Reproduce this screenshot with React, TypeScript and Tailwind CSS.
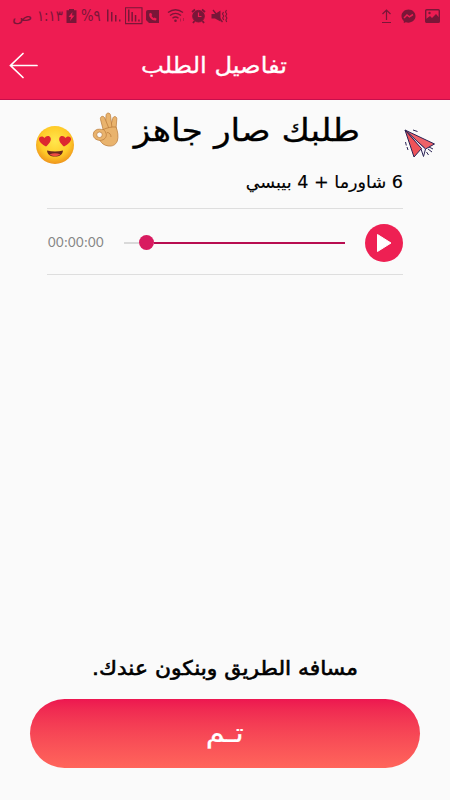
import React from 'react';

const BARS = [0, 4, 8, 12];

function BatteryIcon() {
  return (
    <svg width="11" height="16" viewBox="0 0 11 16" fill="currentColor">
      <path fillRule="evenodd" d="M3 1h5v1.200h2.500V15H.5V2.200H3ZM6.500 4 2.500 9H5l-1 4 4.500-5.500H6Z" />
    </svg>
  );
}

function SignalIcon({ boxed = false }: { boxed?: boolean }) {
  return (
    <svg width={boxed ? 18 : 16} height="18" viewBox={boxed ? '-2 0 18 18' : '0 0 16 18'} fill="currentColor">
      {boxed && <path d="M-1.500.8h16.500v15.800h-16.500Z" fill="none" stroke="currentColor" strokeWidth="1.100" />}
      {BARS.map((x, i) => (
        <rect key={x} x={boxed ? x * 0.85 + 1 : x + 1} y={[2.5, 5, 8, 12.5][i]} width="1.500" height={[12, 9.5, 6.5, 2][i]} />
      ))}
    </svg>
  );
}

function PhoneIcon() {
  return (
    <svg width="13" height="15" viewBox="0 0 13 15">
      <path fill="currentColor" d="M2 1h11v13H3L0 11V3a2 2 0 0 1 2-2Z" />
      <path d="M3.300 4.500 5 3.700l1.300 2.300-.9 1 2.300 2.300 1-.8 2 1.200-.8 1.700C6.500 12 2.500 8.500 3.300 4.500Z" fill="#ee1c52" />
    </svg>
  );
}

function WifiIcon() {
  return (
    <svg width="18" height="16" viewBox="0 0 18 16" fill="none" stroke="currentColor" strokeWidth="1.400">
      <path d="M1 4.500Q8.500-1 16 4.500M3 7.500q5.500-4.300 11 0M5.500 10.300q3-2.500 6 0" />
      <circle cx="8.500" cy="12.800" r="1.300" fill="currentColor" stroke="none" />
      <path d="M13.500 13.500v-3M16.500 10v3" strokeWidth=".8" opacity=".6" />
    </svg>
  );
}

function AlarmIcon() {
  return (
    <svg width="15" height="16" viewBox="0 0 15 16" fill="none" stroke="currentColor">
      <circle cx="7.500" cy="8.200" r="5.800" fill="currentColor" />
      <path d="m1 4 3-2.500M14 4l-3-2.500M3.500 13 2 15m9.500-2 1.500 2" strokeWidth="1.800" />
      <path d="M7.500 4.500v4h3" stroke="#ee1c52" strokeWidth="1.200" />
    </svg>
  );
}

function MuteIcon() {
  return (
    <svg width="17" height="16" viewBox="0 0 17 16" fill="none" stroke="currentColor">
      <path d="M.5 6h3.500L9.500 2.500v11L4 10.500H.5Z" fill="currentColor" stroke="none" />
      <path d="m2 2 9.500 12" strokeWidth="1.300" />
      <path d="m12.500 4-1 2 1.200 2-1 2 1 2M15.500 2l-1 2 1.200 2-1 2 1.200 2-1 2 .8 2" strokeWidth="1.100" />
    </svg>
  );
}

function StatusBar() {
  return (
    <div dir="ltr" className="flex h-8 items-center justify-between pl-3 pr-[10px] text-[#7a1638]">
      <div className="flex items-center text-[15px] leading-none">
        <span className="w-[25px]">
          <span className="inline-block origin-left scale-x-[1.12]">ص</span>
        </span>
        <span className="w-[29px] whitespace-nowrap">
          <span dir="rtl" className="inline-block origin-left scale-x-[.88]">١:١٣</span>
        </span>
        <BatteryIcon />
        <span className="ml-1 w-[25px] whitespace-nowrap">
          <span className="inline-block origin-left scale-x-[.88]">%٩</span>
        </span>
        <SignalIcon />
        <span className="ml-[3px]"><SignalIcon boxed /></span>
        <span className="ml-[3px]"><PhoneIcon /></span>
        <span className="ml-2"><WifiIcon /></span>
        <span className="ml-[6px]"><AlarmIcon /></span>
        <span className="ml-[5px]"><MuteIcon /></span>
      </div>
      <div className="flex items-center gap-[9px]">
        <svg width="11" height="16" viewBox="0 0 11 16" fill="none" stroke="currentColor" strokeWidth="1.200">
          <path d="M5.500 12V2M1.500 6l4-4 4 4M1 14.500h9" />
        </svg>
        <svg width="15" height="15" viewBox="0 0 15 15">
          <path fill="currentColor" d="M7.500.5C3.500.5.500 3.400.500 7.100c0 2 .9 3.700 2.300 4.900V14l2-.7c5 1.400 9.700-1.500 9.700-6.200 0-3.700-3-6.600-7-6.600Z" />
          <path d="m3 9 3-3 2.400 1.800L12 5.500" fill="none" stroke="#ee1c52" strokeWidth="1.500" />
        </svg>
        <svg width="15" height="14" viewBox="0 0 15 14">
          <rect x=".7" y=".7" width="13.600" height="12.600" rx="1" fill="none" stroke="currentColor" strokeWidth="1.400" />
          <path fill="currentColor" d="m1 10 4-3 2 2 4-4 3.500 4v4.500H1Z" />
          <circle cx="4.500" cy="4" r="1.200" fill="currentColor" />
        </svg>
      </div>
    </div>
  );
}

function HeartEyes() {
  return (
    <svg width="40" height="40" viewBox="0 0 40 40">
      <defs>
        <radialGradient id="face" cx=".5" cy=".4" r=".6">
          <stop offset="0" stopColor="#ffe74d" />
          <stop offset=".65" stopColor="#ffcb28" />
          <stop offset="1" stopColor="#ee941c" />
        </radialGradient>
      </defs>
      <circle cx="20" cy="20" r="19" fill="url(#face)" />
      <path d="M11 21.500C7.500 19.500 3.500 16.500 4 13.700c.5-2.800 4.200-3 5.600-.6 1.200-2.500 5-2.800 6-.2 1.100 2.900-1.800 6.100-4.600 8.600Z" fill="#dd2730" />
      <path d="M29 21.500c-2.800-2.500-5.700-5.700-4.600-8.600 1-2.600 4.800-2.300 6 .2 1.400-2.400 5.100-2.200 5.600.6.500 2.800-3.500 5.800-7 7.800Z" fill="#dd2730" />
      <path d="M12 25.500q8 2 16 0c-.5 4-3 6-8 6s-7.500-2-8-6Z" fill="#6b281d" />
      <path d="M14.500 29.500q5.500-2.500 11 0-5.500 3.500-11 0Z" fill="#ef4c43" />
    </svg>
  );
}

function OkHand() {
  return (
    <svg width="28" height="36" viewBox="0 0 28 36" fill="#e9b36d" stroke="#b87838" strokeWidth=".7" strokeLinejoin="round">
      <path d="M17.500 19 20.700 6.500c.7-2.900 4.500-2.300 4.100.7L23.800 20Z" />
      <path d="M13 20 14 3.500c.2-3.200 4.200-3.200 4.500-.2L20.500 20Z" />
      <path d="m11.500 19-3-11.500c-.8-3.200 3-4.400 4.200-1.500L18 19Z" />
      <path
        fillRule="evenodd"
        d="M11.500 17.500C14 16 20 14.500 24 15c1.800 4 2.700 10 1.300 14-1.500 4-5 5.500-9 5-4.500-.6-6.800-3-8.300-5.500-4.500-.5-7-3-6.700-6.300.2-3.500 3.200-5.200 6.200-5 1.600 0 2.800.5 4 .3ZM7.500 20a2.800 2.800 0 1 0 0 5.600 2.800 2.800 0 0 0 0-5.600Z"
      />
      <path d="M8 28.500c4.500-.5 6.500-3 6.300-6-.2-2-1.300-3.800-3-5M15 20.500c2.500 0 4 2 4 4.500" fill="none" />
      <path d="M13.500 18.500q5-2 9.700-1.800l.5 3-7.700.3Z" stroke="none" />
    </svg>
  );
}

function PaperPlane() {
  return (
    <svg width="32" height="32" viewBox="0 0 32 32" fill="none" stroke="#292254" strokeLinejoin="round" strokeWidth="1">
      <path d="m1 1 29.500 14L21.500 20Z" fill="#ee6268" />
      <path d="m1 1 20.500 19L19.500 27.500 17 20Z" fill="#f5f2fb" />
      <path d="m1 1 16.500 18.500L10 28Z" fill="#ee5359" />
      <path d="m9 1 4.500 1.500M1.500 13l.8 3.500m.7 1.500 1 3M24 20l4 3m-3-5 4 2M22.500 23l2 3" />
    </svg>
  );
}

function VoiceNote() {
  return (
    <div dir="ltr" className="mx-[47px] flex h-[67px] items-center border-y border-[#dedede] pt-[2px]">
      <span className="w-[77px] pl-px pt-px font-['Lato',sans-serif] text-[13px] tracking-[.55px] text-[#858585]">00:00:00</span>
      <div className="flex w-[221px] items-center">
        <div className="h-[2px] w-[15px] bg-[#d9d9d9]" />
        <div className="size-[15px] rounded-full bg-[#d81b60]" />
        <div className="h-[2px] flex-1 bg-[#b80d50]" />
      </div>
      <button className="ml-5 flex size-[38px] shrink-0 items-center justify-center rounded-full bg-[#ee2053]">
        <svg width="16" height="20" viewBox="0 0 16 20" fill="white">
          <path d="M1.500 1.500 15 10 1.500 18.500Z" stroke="white" strokeLinejoin="round" />
        </svg>
      </button>
    </div>
  );
}

export default function App() {
  return (
    <div dir="rtl" className="flex h-[800px] w-[450px] flex-col overflow-hidden bg-[#fafafa] font-['DejaVu_Sans',sans-serif] text-black">
      <header className="h-[100px] shrink-0 border-b border-[#c60f4c] bg-[#ee1c52]">
        <StatusBar />
        <div dir="ltr" className="flex h-[67px] items-center text-white">
          <button className="ml-[9px] w-[29px]">
            <svg width="29" height="27" viewBox="0 0 29 27" fill="none" stroke="white" strokeWidth="1.700" strokeLinecap="round">
              <path d="M28 13.500H1.500M14 1.500l-12.500 12L14 25.500" />
            </svg>
          </button>
          <h1 dir="rtl" className="mr-[163px] flex-1 origin-right scale-x-[1.1] whitespace-nowrap text-[22px] [-webkit-text-stroke:0.3px_white]">
            تفاصيل الطلب
          </h1>
        </div>
      </header>

      <main className="flex flex-1 flex-col">
        <div dir="ltr" className="flex h-[68px] items-start pl-[35px]">
          <div className="mt-[25px]"><HeartEyes /></div>
          <div className="ml-[17px] mt-3"><OkHand /></div>
          <h2 dir="rtl" className="ml-3 w-[228px] origin-right scale-x-[1.115] whitespace-nowrap pt-2 text-[31px] leading-[44px] [-webkit-text-stroke:0.3px_black]">
            طلبك صار جاهز
          </h2>
          <div className="ml-11 mt-[29px]"><PaperPlane /></div>
        </div>
        <p className="mr-[47px] h-10 origin-right scale-x-[1.035] text-[17px] leading-7 [-webkit-text-stroke:0.15px_black]">6 شاورما + 4 بيبسي</p>
        <VoiceNote />

        <div className="mt-auto px-[30px] pb-8">
          <p className="mb-[15px] scale-x-[1.09] whitespace-nowrap text-center text-[20px] leading-8 [-webkit-text-stroke:0.6px_black]">
            مسافه الطريق وبنكون عندك.
          </p>
          <button className="h-[69px] w-full rounded-full bg-gradient-to-b from-[#ed1650] to-[#ff655b] text-[27px] text-white">
            <span className="inline-block scale-x-[1.14] [-webkit-text-stroke:0.2px_white]">تـم</span>
          </button>
        </div>
      </main>
    </div>
  );
}
